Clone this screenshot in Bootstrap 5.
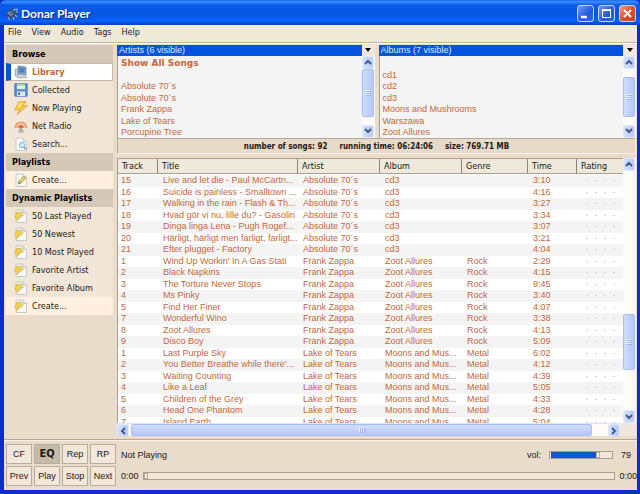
<!DOCTYPE html>
<html lang="en">
<head>
<meta charset="utf-8">
<meta name="viewport" content="width=device-width, initial-scale=1">
<title>Donar Player</title>
<link href="https://cdn.jsdelivr.net/npm/bootstrap@5.3.0/dist/css/bootstrap.min.css" rel="stylesheet">
<style>
:root{--ink:#c4683a;--sand:#e9dccb;--ui:"DejaVu Sans Condensed","DejaVu Sans",sans-serif;--list:"Liberation Sans",Arial,sans-serif}
body{font:9px/14px var(--ui);color:#1c1814;background:#0a2fc8}
button{font:inherit;color:inherit;padding:0;border:0;background:none}
ul{margin:0;padding:0;list-style:none}
.titlebar{height:25px;padding:3px 4px 0 1px;background:linear-gradient(#1c6cf0 0,#3a8cff 2px,#0a5ce8 5px,#0654e2 14px,#0a62fa 21px,#0340c0 25px);border-radius:6px 6px 0 0}
.titlebar h1{font:bold 12px/20px Lato,sans-serif;color:#fff;text-shadow:1px 1px 1px #0a2a80;margin:0 0 0 2px}
.caption-btn{width:17px;height:17px;border:1px solid #c4d8ff;border-radius:3px;background:linear-gradient(135deg,#6e9cf6,#2358d8 60%,#2c6ae8);display:flex}
.caption-btn.close-app{background:linear-gradient(135deg,#f0a080,#e2502c 50%,#c8401c)}
.window-body{margin:0 3px 4px 4px;background:var(--sand);min-height:0}
.menubar{height:18px;background:#eee9d9;border-bottom:1px solid #bdb6a6;padding:0 4px;gap:10px}
.menubar a{color:#1c1814;text-decoration:none;line-height:15px}
.workspace{min-height:0;padding:1px 1px 3px 1px;gap:4px;border-top:1px solid #fff}
.sidebar{width:108px;background:#f2e6d8;padding-left:1px}
.sidebar-wrap{background:var(--sand)}
.sidebar h2{font:bold 9px/18px var(--ui);height:18px;background:#d6c8b8;margin:0;padding-left:6px;color:#000}
.side-item{display:flex;align-items:center;width:100%;height:18px;padding-left:8px;gap:4px;text-align:left}
.side-item svg{width:14px;height:14px;flex:none}
.side-item.create{background:#fff0e1}
.side-item.current{background:#fff;border:1px solid #c8b8a4;border-left:5px solid #0b52d8;padding-left:3px;color:var(--ink);font-weight:bold}
.pane-bar{height:11px}
.pane-bar h3{font:9px/11px var(--list);color:#dcecff;background:#0453de;margin:0;padding-left:2px}
.pane-menu{width:13px;background:#f3eadf;display:flex;align-items:center;justify-content:center}
.browser{height:93px}
.browser ul{background:#f4f4f4;color:var(--ink);font:9px/12px var(--list);padding:1px 0 0 3px;border-left:1px solid #a8a094;overflow:hidden}
.browser li{height:12px;white-space:nowrap}
.browser li:nth-child(even){height:11px}
.browser .all{font:bold 9px/12px "DejaVu Sans",sans-serif}
.vscroll{width:13px;background:#fcfbf8;display:flex;flex-direction:column;padding:0 1px 0 0}
.arrow{width:12px;height:13px;flex:none;background:linear-gradient(90deg,#d4e0fd,#b8ccf8);border:1px solid #dfe8fd;border-radius:2px;display:flex;align-items:center;justify-content:center}
.thumb{background:linear-gradient(90deg,#cfdcfd,#b6c8f8);border:1px solid #a9bdf0;border-radius:2px;display:flex;align-items:center;justify-content:center}
.hscroll{height:13px;background:#fcfbf8;border-top:1px solid #dfe6f8;border-right:16px solid #eee7dc}
.hscroll .thumb{background:linear-gradient(#cfdcfd,#b6c8f8);margin-left:2px}
.summary{font:bold 8px/15px var(--ui);color:#1c1814;height:16px;border:1px solid #b5a998;border-right-color:#f8f0e6;border-bottom-color:#f8f0e6;background:#e8dac9;gap:12px;margin-bottom:4px}
.songs{min-height:0;overflow:hidden;background:#fff;border-left:1px solid #a8a094;border-top:1px solid #a8a094}
.song-table{table-layout:fixed;width:100%;border-collapse:separate;border-spacing:0;font:9px/11px var(--list);color:var(--ink)}
.song-table th{font:9px/14px var(--ui);color:#1c1814;background:#eee9da;height:15px;padding:0 0 0 4px;border-right:1px solid #8c877a;border-bottom:1px solid #a7a190}
.song-table th:last-child{border-right:0}
.song-table td{padding:0 0 0 5px;height:12px;overflow:hidden;white-space:nowrap}
.song-table td:first-child{padding-left:3px}
.song-table tbody tr:nth-child(even) td{height:11px}
.song-table tbody tr:nth-child(odd) td{background:#f4f4f4}
.song-table tbody tr:first-child td{border-top:1px solid #fff;height:13px}
.song-table td:last-child::after{content:"";display:block;height:1px;margin:0 6px 0 9px;background:repeating-linear-gradient(90deg,#d8d2ca 0 2px,transparent 2px 9px)}
.song-table td:last-child{padding:0}
.col-track{width:40px}.col-artist{width:82px}.col-album{width:82px}.col-genre{width:66px}.col-time{width:49px}.col-rating{width:46px}
.player{height:51px;border-top:1px solid #b5a998;box-shadow:inset 0 1px #f8f1e8;padding:4px 0 3px 2px;gap:5px;font:9px/14px var(--list)}
.keys{display:grid;grid-template-columns:repeat(4,26px);grid-auto-rows:20px;gap:2px}
.keys button{background:#f2e7da;border:1px solid #b9ad9b}
.keys .on{background:#c6baa9;font:bold 11px/16px var(--ui)}
input[type=range]{appearance:none;margin:0;height:8px;background:#f2e6d9;border:1px solid #aaa08f;display:block}
input[type=range]::-webkit-slider-thumb{appearance:none;width:4px;height:6px;background:#f6eee4;border:1px solid #b8ad9d}
.volume{width:64px}
.volume[type=range]{background:linear-gradient(90deg,#f2e6d9 1px,#1556cc 1px 76%,#f2e6d9 76%)}
.vol-value{width:16px}
</style>
<script src="https://cdn.jsdelivr.net/npm/bootstrap@5.3.0/dist/js/bootstrap.bundle.min.js"></script>
</head>
<body class="vh-100 d-flex flex-column overflow-hidden">
<svg class="d-none">
  <symbol id="up" viewBox="0 0 8 6"><path d="M1 5l3-3 3 3" fill="none" stroke="#40598f" stroke-width="2"/></symbol>
  <symbol id="down" viewBox="0 0 8 6"><path d="M1 1l3 3 3-3" fill="none" stroke="#40598f" stroke-width="2"/></symbol>
  <symbol id="left" viewBox="0 0 6 8"><path d="M5 1L2 4l3 3" fill="none" stroke="#40598f" stroke-width="2"/></symbol>
  <symbol id="right" viewBox="0 0 6 8"><path d="M1 1l3 3-3 3" fill="none" stroke="#40598f" stroke-width="2"/></symbol>
  <symbol id="grip" viewBox="0 0 6 6"><path d="M0 .5h5M0 2.500h5M0 4.500h5" stroke="#eef4ff"/><path d="M1 1.500h5M1 3.500h5M1 5.500h5" stroke="#8fa8e4" stroke-width=".7"/></symbol>
  <symbol id="page" viewBox="0 0 14 14"><path d="M2 1h7l3.500 3.500V13.500H2z" fill="#f6f8f8" stroke="#b9c0c4" stroke-width=".8"/><path d="M9 1v3.500h3.500" fill="#dfe5ea" stroke="#b9c0c4" stroke-width=".8"/></symbol>
  <symbol id="dynamic" viewBox="0 0 14 14"><use href="#page"/><path d="M2.500 3.500L8 3 6.500 6 9.500 5.800 2 12 4 8.500 .8 8.800z" fill="#f2d24a" stroke="#d0a838" stroke-width=".6"/></symbol>
  <symbol id="bolt" viewBox="0 0 14 14"><path d="M4.500 1L12 .5 8.500 5l5-.5L3 13.500 6 8.500.8 9z" fill="#fbc83c" stroke="#e09a2c" stroke-width=".7"/><path d="M5 2l4-.3L6 6l-3 1z" fill="#ffe58a"/></symbol>
</svg>

<header class="titlebar d-flex align-items-center">
  <svg width="14" height="14" viewBox="0 0 14 14" class="ms-1" aria-hidden="true"><path d="M1 6l5-4 5 1 1 4-5 5-5-1z" fill="#31507a"/><path d="M2 6l4-2 3 2-3 3z" fill="#7d98b8"/><path d="M8 3l4-1v4M3 10l2 3M8 10l1 3M10 8l2 2" stroke="#8fa6be" stroke-width="1.300" fill="none"/><path d="M5 6h3" stroke="#1c2a44"/></svg>
  <h1 class="flex-grow-1">Donar Player</h1>
  <div class="d-flex gap-1 me-0">
    <button class="caption-btn" aria-label="Minimize"><svg viewBox="0 0 15 15"><path d="M3 11h6" stroke="#fff" stroke-width="2.500"/></svg></button>
    <button class="caption-btn" aria-label="Maximize"><svg viewBox="0 0 15 15"><path d="M3.500 3.500h8v8h-8z" fill="none" stroke="#fff"/><path d="M3 4h9" stroke="#fff" stroke-width="2"/></svg></button>
    <button class="caption-btn close-app" aria-label="Close"><svg viewBox="0 0 15 15"><path d="M4 4l7 7M11 4l-7 7" stroke="#fff" stroke-width="1.800"/></svg></button>
  </div>
</header>

<div class="window-body flex-grow-1 d-flex flex-column">
  <nav class="menubar d-flex"><a href="#">File</a><a href="#">View</a><a href="#">Audio</a><a href="#">Tags</a><a href="#">Help</a></nav>

  <div class="workspace flex-grow-1 d-flex">
    <aside class="sidebar-wrap flex-shrink-0">
      <div class="sidebar">
      <h2>Browse</h2>
      <button class="side-item current"><svg viewBox="0 0 14 14"><path d="M4 1l8 1v8l-8-1z" fill="#8aa6c8" stroke="#5a7898" stroke-width=".7"/><path d="M5 2.500l5.500.6v5L5 7.600z" fill="#4f86c4"/><path d="M1 4h3v7H1z" fill="#c3ced9" stroke="#7c8da0" stroke-width=".6"/><path d="M4 11l8 0 1 2H3z" fill="#cfd4d8" stroke="#8e9aa4" stroke-width=".5"/></svg>Library</button>
      <button class="side-item"><svg viewBox="0 0 14 14"><path d="M.8.800h12.400v12.400H.8z" fill="#5f94d0" stroke="#3c6fae" stroke-width=".8"/><path d="M3 1h8v5H3z" fill="#e6f0dc"/><path d="M3 2h8" stroke="#90b870"/><path d="M3 8.500h8V13H3z" fill="#dde6ee"/><path d="M4 9.500h2V12H4z" fill="#5478a4"/></svg>Collected</button>
      <button class="side-item"><svg><use href="#bolt"/></svg>Now Playing</button>
      <button class="side-item"><svg viewBox="0 0 14 14"><path d="M1.500 9a5.500 5.500 0 1 1 11 0" fill="none" stroke="#e9a06c" stroke-width="2.200"/><path d="M4.500 9a2.500 2.500 0 1 1 5 0" fill="none" stroke="#dc7c4c" stroke-width="1.600"/><path d="M6.200 8h1.600l2.200 5.500H4z" fill="#a9b4b4"/><circle cx="7" cy="8" r="1.400" fill="#cf6038"/></svg>Net Radio</button>
      <button class="side-item"><svg viewBox="0 0 14 14"><use href="#page"/><circle cx="8" cy="8" r="2.600" fill="#d4ecfa" stroke="#8eb4d0"/><path d="M10 10l2.500 2.500" stroke="#7c98b4" stroke-width="1.500"/></svg>Search...</button>
      <h2>Playlists</h2>
      <button class="side-item create"><svg viewBox="0 0 14 14"><use href="#page"/><path d="M4 11l1-3 5-5 2 2-5 5z" fill="#e8cc60" stroke="#94884c" stroke-width=".6"/><path d="M4 11l1-3 2 2z" fill="#7e8c6c"/></svg>Create...</button>
      <h2>Dynamic Playlists</h2>
      <button class="side-item"><svg><use href="#dynamic"/></svg>50 Last Played</button>
      <button class="side-item"><svg><use href="#dynamic"/></svg>50 Newest</button>
      <button class="side-item"><svg><use href="#dynamic"/></svg>10 Most Played</button>
      <button class="side-item"><svg><use href="#dynamic"/></svg>Favorite Artist</button>
      <button class="side-item"><svg><use href="#dynamic"/></svg>Favorite Album</button>
      <button class="side-item create"><svg><use href="#dynamic"/></svg>Create...</button>
      </div>
    </aside>

    <main class="flex-grow-1 d-flex flex-column overflow-hidden">
      <div class="browser d-flex flex-shrink-0">
        <section class="d-flex flex-column flex-fill w-50 me-1">
          <div class="pane-bar d-flex"><h3 class="flex-grow-1">Artists (6 visible)</h3><button class="pane-menu" aria-label="Artist options"><svg width="6" height="4"><path d="M0 0h6L3 4z"/></svg></button></div>
          <div class="d-flex flex-grow-1 overflow-hidden">
            <ul class="flex-grow-1"><li class="all">Show All Songs</li><li></li><li>Absolute 70´s</li><li>Absolute 70´s</li><li>Frank Zappa</li><li>Lake of Tears</li><li>Porcupine Tree</li></ul>
            <div class="vscroll"><button class="arrow" aria-label="Up"><svg width="8" height="6"><use href="#up"/></svg></button><div class="thumb h-50 flex-grow-1"><svg width="6" height="6"><use href="#grip"/></svg></div><div class="pt-2"></div><button class="arrow" aria-label="Down"><svg width="8" height="6"><use href="#down"/></svg></button></div>
          </div>
        </section>
        <section class="d-flex flex-column flex-fill w-50">
          <div class="pane-bar d-flex"><h3 class="flex-grow-1">Albums (7 visible)</h3><button class="pane-menu" aria-label="Album options"><svg width="6" height="4"><path d="M0 0h6L3 4z"/></svg></button></div>
          <div class="d-flex flex-grow-1 overflow-hidden">
            <ul class="flex-grow-1"><li></li><li>cd1</li><li>cd2</li><li>cd3</li><li>Moons and Mushrooms</li><li>Warszawa</li><li>Zoot Allures</li></ul>
            <div class="vscroll"><button class="arrow" aria-label="Up"><svg width="8" height="6"><use href="#up"/></svg></button><div class="pt-2"></div><div class="thumb flex-grow-1"><svg width="6" height="6"><use href="#grip"/></svg></div><div class="pt-2"></div><button class="arrow" aria-label="Down"><svg width="8" height="6"><use href="#down"/></svg></button></div>
          </div>
        </section>
      </div>

      <div class="summary d-flex justify-content-center flex-shrink-0"><span>number of songs: 92</span><span>running time: 06:24:06</span><span>size: 769.71 MB</span></div>

      <div class="d-flex flex-grow-1 overflow-hidden">
        <div class="songs flex-grow-1">
          <table class="song-table">
            <colgroup><col class="col-track"><col><col class="col-artist"><col class="col-album"><col class="col-genre"><col class="col-time"><col class="col-rating"></colgroup>
            <thead><tr><th>Track</th><th>Title</th><th>Artist</th><th>Album</th><th>Genre</th><th>Time</th><th>Rating</th></tr></thead>
            <tbody>
            <tr><td>15</td><td>Live and let die - Paul McCartn...</td><td>Absolute 70´s</td><td>cd3</td><td></td><td>3:10</td><td></td></tr>
            <tr><td>16</td><td>Suicide is painless - Smalltown ...</td><td>Absolute 70´s</td><td>cd3</td><td></td><td>4:16</td><td></td></tr>
            <tr><td>17</td><td>Walking in the rain - Flash &amp; Th...</td><td>Absolute 70´s</td><td>cd3</td><td></td><td>3:27</td><td></td></tr>
            <tr><td>18</td><td>Hvad gör vi nu, lille du? - Gasolin</td><td>Absolute 70´s</td><td>cd3</td><td></td><td>3:34</td><td></td></tr>
            <tr><td>19</td><td>Dinga linga Lena - Pugh Rogef...</td><td>Absolute 70´s</td><td>cd3</td><td></td><td>3:07</td><td></td></tr>
            <tr><td>20</td><td>Härligt, härligt men farligt, farligt...</td><td>Absolute 70´s</td><td>cd3</td><td></td><td>3:21</td><td></td></tr>
            <tr><td>21</td><td>Efter plugget - Factory</td><td>Absolute 70´s</td><td>cd3</td><td></td><td>4:04</td><td></td></tr>
            <tr><td>1</td><td>Wind Up Workin' In A Gas Stati</td><td>Frank Zappa</td><td>Zoot Allures</td><td>Rock</td><td>2:29</td><td></td></tr>
            <tr><td>2</td><td>Black Napkins</td><td>Frank Zappa</td><td>Zoot Allures</td><td>Rock</td><td>4:15</td><td></td></tr>
            <tr><td>3</td><td>The Torture Never Stops</td><td>Frank Zappa</td><td>Zoot Allures</td><td>Rock</td><td>9:45</td><td></td></tr>
            <tr><td>4</td><td>Ms Pinky</td><td>Frank Zappa</td><td>Zoot Allures</td><td>Rock</td><td>3:40</td><td></td></tr>
            <tr><td>5</td><td>Find Her Finer</td><td>Frank Zappa</td><td>Zoot Allures</td><td>Rock</td><td>4:07</td><td></td></tr>
            <tr><td>7</td><td>Wonderful Wino</td><td>Frank Zappa</td><td>Zoot Allures</td><td>Rock</td><td>3:38</td><td></td></tr>
            <tr><td>8</td><td>Zoot Allures</td><td>Frank Zappa</td><td>Zoot Allures</td><td>Rock</td><td>4:13</td><td></td></tr>
            <tr><td>9</td><td>Disco Boy</td><td>Frank Zappa</td><td>Zoot Allures</td><td>Rock</td><td>5:09</td><td></td></tr>
            <tr><td>1</td><td>Last Purple Sky</td><td>Lake of Tears</td><td>Moons and Mus...</td><td>Metal</td><td>6:02</td><td></td></tr>
            <tr><td>2</td><td>You Better Breathe while there'...</td><td>Lake of Tears</td><td>Moons and Mus...</td><td>Metal</td><td>4:12</td><td></td></tr>
            <tr><td>3</td><td>Waiting Counting</td><td>Lake of Tears</td><td>Moons and Mus...</td><td>Metal</td><td>4:39</td><td></td></tr>
            <tr><td>4</td><td>Like a Leaf</td><td>Lake of Tears</td><td>Moons and Mus...</td><td>Metal</td><td>5:05</td><td></td></tr>
            <tr><td>5</td><td>Children of the Grey</td><td>Lake of Tears</td><td>Moons and Mus...</td><td>Metal</td><td>4:33</td><td></td></tr>
            <tr><td>6</td><td>Head One Phantom</td><td>Lake of Tears</td><td>Moons and Mus...</td><td>Metal</td><td>4:28</td><td></td></tr>
            <tr><td>7</td><td>Island Earth</td><td>Lake of Tears</td><td>Moons and Mus...</td><td>Metal</td><td>5:04</td><td></td></tr>
            </tbody>
          </table>
        </div>
        <div class="vscroll"><button class="arrow" aria-label="Up"><svg width="8" height="6"><use href="#up"/></svg></button><div class="flex-grow-1"></div><div class="thumb py-4"><svg width="6" height="6"><use href="#grip"/></svg></div><div class="pt-4 pb-3"></div><button class="arrow" aria-label="Down"><svg width="8" height="6"><use href="#down"/></svg></button></div>
      </div>
      <div class="hscroll d-flex flex-shrink-0"><button class="arrow" aria-label="Left"><svg width="6" height="8"><use href="#left"/></svg></button><div class="thumb flex-grow-1"><svg width="6" height="6" viewBox="0 0 6 6"><path d="M.5 0v5M2.500 0v5M4.500 0v5" stroke="#eef4ff"/><path d="M1.500 1v5M3.500 1v5M5.500 1v5" stroke="#8fa8e4" stroke-width=".7"/></svg></div><div class="ps-3"></div><button class="arrow" aria-label="Right"><svg width="6" height="8"><use href="#right"/></svg></button></div>
    </main>
  </div>

  <footer class="player d-flex flex-shrink-0">
    <div class="keys"><button>CF</button><button class="on">EQ</button><button>Rep</button><button>RP</button><button>Prev</button><button>Play</button><button>Stop</button><button>Next</button></div>
    <div class="flex-grow-1 d-flex flex-column justify-content-around">
      <div class="d-flex align-items-center gap-2"><span class="flex-grow-1">Not Playing</span><label for="vol">vol:</label><input id="vol" class="volume" type="range" value="79"><output for="vol" class="vol-value">79</output></div>
      <div class="d-flex align-items-center gap-1"><label for="seek">0:00</label><input id="seek" class="flex-grow-1" type="range" value="0"><span>0:00</span></div>
    </div>
  </footer>
</div>
</body>
</html>
